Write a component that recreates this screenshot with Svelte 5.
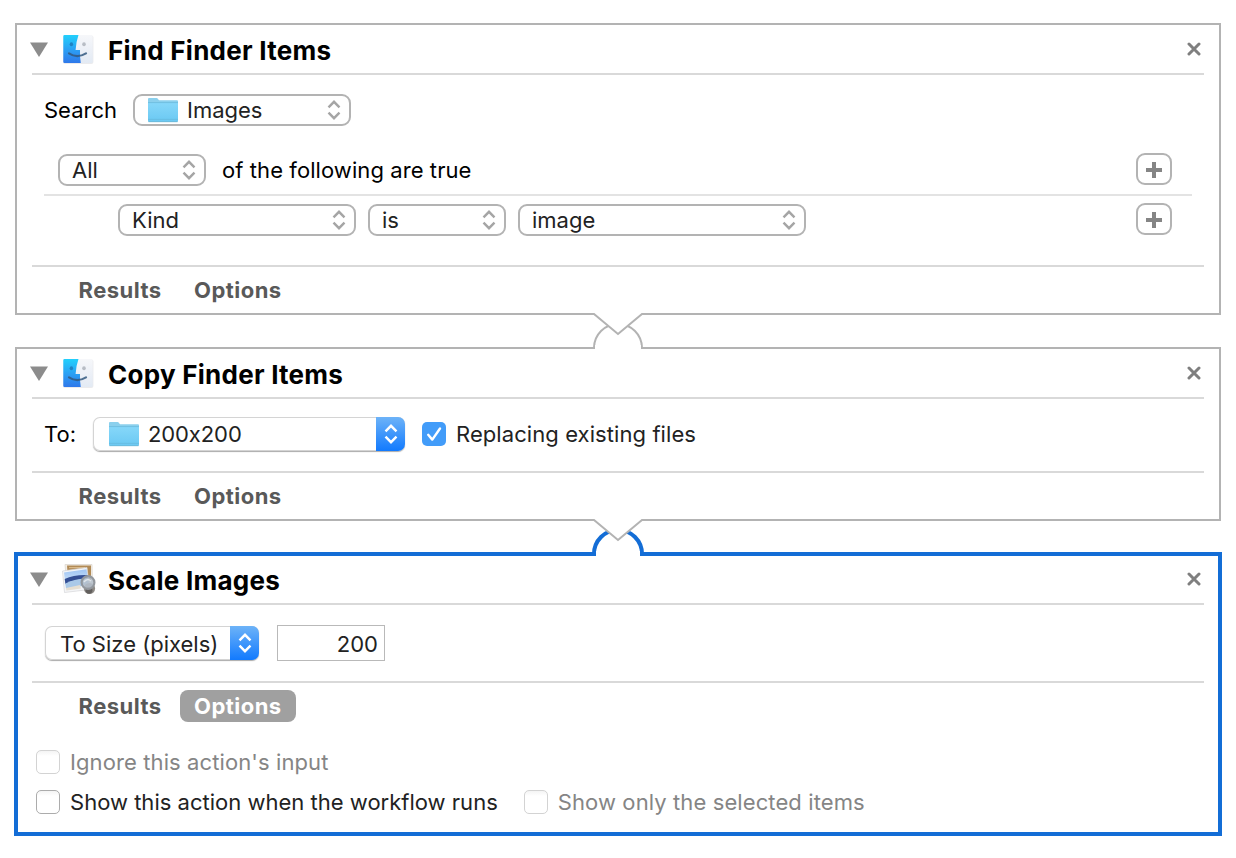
<script>
  let replacing = $state(true);
  let size = $state('200');
</script>

{#snippet finder()}
  <svg class="appicon" width="36" height="34" viewBox="0 0 36 34">
    <defs>
      <linearGradient id="fb" x1="0" y1="0" x2="0" y2="1"><stop offset="0" stop-color="#22d0fc" /><stop offset=".5" stop-color="#2ba2f4" /><stop offset="1" stop-color="#2f78ea" /></linearGradient>
      <linearGradient id="fw" x1="0" y1="0" x2="0" y2="1"><stop offset="0" stop-color="#f6f7fa" /><stop offset="1" stop-color="#e3eaf4" /></linearGradient>
    </defs>
    <rect x="2" y="3.4" width="30.4" height="28.6" rx="2" fill="#dedee1" opacity=".6" />
    <rect x="2.3" y="3" width="29.4" height="28" rx="1.5" fill="url(#fw)" />
    <path d="M3.5 3H17.5Q15 10 14.6 18H19Q18.6 24 19.8 31H3.5Q2.3 31 2.3 29.8V4.2Q2.3 3 3.5 3Z" fill="url(#fb)" />
    <ellipse cx="10.4" cy="12.2" rx="1.7" ry="2" fill="#1c6aa8" opacity=".65" />
    <ellipse cx="23" cy="12.2" rx="1.8" ry="2" fill="#a6abb4" opacity=".75" />
    <path d="M8 21.4Q16 26.8 25 21.4" fill="none" stroke="#34597f" stroke-width="2.2" stroke-linecap="round" opacity=".85" />
  </svg>
{/snippet}

{#snippet picture()}
  <svg class="appicon" width="36" height="34" viewBox="0 0 36 34">
    <defs>
      <linearGradient id="sky" x1="0" y1="0" x2="0" y2="1"><stop offset="0" stop-color="#9fc4f3" /><stop offset="1" stop-color="#d5e9fb" /></linearGradient>
    </defs>
    <path d="M4 2.5L31 2.5L31.5 23L6 24Z" fill="#f3eee6" stroke="#ddd8d0" stroke-width=".8" />
    <path d="M6 3.5H30V19H7Z" fill="#b18a55" />
    <path d="M8 5H24V6.2H8Z" fill="#d9b98a" />
    <path d="M1.5 9L26 5.5L28.5 27.5L3.5 30.5Z" fill="#f4f5f7" stroke="#d5d6d8" stroke-width=".7" />
    <path d="M3 10.5L25.5 7.3L27.5 20.5L4.5 23.5Z" fill="url(#sky)" />
    <path d="M3.7 17Q13 12.5 26.4 13L27 16.5Q14 17 4.4 22Z" fill="#344f94" />
    <path d="M4.4 21.5Q14 16.5 27 16.5L28 23L5 26.5Z" fill="#aac9e8" />
    <path d="M5 26L19 23L20 26.5L5.4 28.6Z" fill="#e6dfd2" />
    <circle cx="28.5" cy="26.5" r="5.6" fill="#8d8985" />
    <circle cx="28" cy="28.3" r="3.4" fill="#625f5d" />
    <circle cx="27" cy="20.5" r="6.4" fill="#b5bfcb" fill-opacity=".85" stroke="#92979d" stroke-width="2.2" />
    <path d="M23 20Q26 15.8 30 19" fill="none" stroke="#e0e6eb" stroke-width="1.5" />
  </svg>
{/snippet}

{#snippet header(title, icon)}
  <header>
    <svg class="disclosure" width="18" height="15"><path d="M0 .5H18L9 15Z" fill="#8c8c8c" /></svg>
    {@render icon()}
    <h2>{title}</h2>
    <svg class="close" width="14" height="14"><path d="M2 2L12 12M12 2L2 12" stroke="#7f7f7f" stroke-width="3" stroke-linecap="round" /></svg>
  </header>
{/snippet}

{#snippet folder()}
  <svg class="folder" width="32" height="26" viewBox="0 0 32 26">
    <defs><linearGradient id="fold" x1="0" y1="0" x2="0" y2="1"><stop offset="0" stop-color="#86d7f9" /><stop offset="1" stop-color="#6bc9f3" /></linearGradient></defs>
    <path d="M1 2Q1 1 2 1H9.5Q10.5 1 11 2L12 3.2H30Q31 3.2 31 4.2V24Q31 25 30 25H2Q1 25 1 24Z" fill="#8bd0ed" />
    <path d="M1 6H31V23.3Q31 24.3 30 24.3H2Q1 24.3 1 23.3Z" fill="url(#fold)" />
    <path d="M1 5.6H31M1 22.4H31" stroke="#66b9dd" stroke-width=".7" />
    <path d="M1.5 24.7H30.5" stroke="#60b2d5" stroke-width=".8" />
  </svg>
{/snippet}

{#snippet arrows()}
  <svg class="arrows" width="14" height="20" viewBox="0 0 14 20"><path d="M1.5 7.3L7 1.8L12.5 7.3M1.5 12.7L7 18.2L12.5 12.7" fill="none" stroke="currentColor" stroke-width="2.4" /></svg>
{/snippet}

{#snippet add()}
  <button class="add" aria-label="Add"><svg width="16" height="16"><path d="M8 0V16M0 8H16" stroke="#858585" stroke-width="4" /></svg></button>
{/snippet}

{#snippet connector(selected)}
  <svg class="connector" width="60" height="46" viewBox="0 0 60 46">
    <path d={selected ? 'M6 37V35A24 24 0 0 1 54 35V37' : 'M6 36V35A24 24 0 0 1 54 35V36'} fill="#fff" stroke={selected ? '#136dd6' : '#b3b3b3'} stroke-width={selected ? 4 : 2} />
    <rect x={selected ? 8 : 7} y="32" width={selected ? 44 : 46} height="6" fill="#fff" />
    <path d="M6 -2V1L30 21L54 1V-2Z" fill="#fff" />
    <path d="M5 1H6L30 21L54 1H55" fill="none" stroke="#b3b3b3" stroke-width="2" />
  </svg>
{/snippet}

<main>
  <section class="card">
    {@render header('Find Finder Items', finder)}
    <div class="body find">
      <div class="row search">
        <span>Search</span>
        <div class="select images">{@render folder()}<span>Images</span>{@render arrows()}</div>
      </div>
      <div class="row rule">
        <div class="select all"><span>All</span>{@render arrows()}</div>
        <span class="phrase">of the following are true</span>
        {@render add()}
      </div>
      <div class="row criteria">
        <div class="select kind"><span>Kind</span>{@render arrows()}</div>
        <div class="select is"><span>is</span>{@render arrows()}</div>
        <div class="select value"><span>image</span>{@render arrows()}</div>
        {@render add()}
      </div>
    </div>
    <footer><span class="tab">Results</span><span class="tab">Options</span></footer>
    {@render connector(false)}
  </section>

  <section class="card">
    {@render header('Copy Finder Items', finder)}
    <div class="body copy">
      <span class="to">To:</span>
      <div class="popup dest">{@render folder()}<span class="folder-name">200x200</span><i>{@render arrows()}</i></div>
      <button class="check on" aria-label="Replacing existing files" onclick={() => (replacing = !replacing)}>
        {#if replacing}<svg width="24" height="24"><path d="M6.2 12.8L10.3 17.6L18 6.5" fill="none" stroke="#fff" stroke-width="2.4" stroke-linecap="round" stroke-linejoin="round" /></svg>{/if}
      </button>
      <span class="replacing">Replacing existing files</span>
    </div>
    <footer><span class="tab">Results</span><span class="tab">Options</span></footer>
    {@render connector(true)}
  </section>

  <section class="card selected">
    {@render header('Scale Images', picture)}
    <div class="body scale">
      <div class="popup size"><span>To Size (pixels)</span><i>{@render arrows()}</i></div>
      <input aria-label="Size" bind:value={size} />
    </div>
    <footer><span class="tab">Results</span><span class="tab active">Options</span></footer>
    <div class="options">
      <div class="row dim"><span class="check"></span><span>Ignore this action's input</span></div>
      <div class="row">
        <span class="check"></span><span class="show">Show this action when the workflow runs</span>
        <div class="row dim only"><span class="check"></span><span>Show only the selected items</span></div>
      </div>
    </div>
  </section>
</main>

<style>
  :global(body) { margin: 0; background: #fff; }
  main {
    box-sizing: border-box;
    width: 1236px;
    height: 858px;
    padding: 23px 15px 0;
    display: flex;
    flex-direction: column;
    gap: 32px;
    font: 22px/26px Inter, sans-serif;
    font-feature-settings: "calt" 0;
    color: #000;
    white-space: nowrap;
    overflow: hidden;
  }
  svg { display: block; flex: none; }
  .card {
    position: relative;
    box-sizing: border-box;
    border: 2px solid #b3b3b3;
    padding: 0 15px;
    flex: none;
  }
  .selected { border: 4px solid #136dd6; margin: -1px -1px 0; padding: 0 14px; height: 284px; }
  header {
    box-sizing: border-box;
    height: 50px;
    display: flex;
    align-items: center;
    border-bottom: 2px solid #d9d9d9;
  }
  .selected header { height: 49px; padding-bottom: 1px; }
  .disclosure { margin-left: -2px; }
  .appicon { margin-left: 13px; }
  h2 { margin: 3px 0 0 11px; font-size: 26px; line-height: 30px; font-weight: 700; letter-spacing: .26px; }
  .close { margin: 0 3px 0 auto; }
  .body { box-sizing: border-box; border-bottom: 2px solid #d9d9d9; display: flex; align-items: center; }
  .row { display: flex; align-items: center; }
  .find { height: 192px; flex-direction: column; align-items: stretch; padding: 19px 12px 0; }
  .search { height: 32px; }
  .search > span { width: 89px; }
  .rule { box-sizing: border-box; margin-top: 18px; height: 52px; padding: 2px 20px 0 14px; border-bottom: 2px solid #e3e3e3; }
  .criteria { height: 48px; padding: 0 20px 0 74px; gap: 12px; }
  .phrase { margin-left: 16px; letter-spacing: .08px; }
  .select {
    box-sizing: border-box;
    height: 32px;
    border: 2px solid #b3b3b3;
    border-radius: 9px;
    padding: 0 8px 0 12px;
    display: flex;
    align-items: center;
    color: #222;
  }
  .select .arrows { margin-left: auto; color: #a5a5a5; }
  .images { width: 218px; }
  .folder { margin-right: 8px; }
  .all { width: 148px; }
  .kind { width: 238px; }
  .is { width: 138px; }
  .value { width: 288px; }
  .add {
    box-sizing: border-box;
    width: 36px;
    height: 32px;
    margin: -2px 0 0 auto;
    padding: 2px 0 0;
    border: 2px solid #b3b3b3;
    border-radius: 9px;
    background: #fff;
    display: grid;
    place-items: center;
  }
  footer { height: 46px; padding-left: 32px; display: flex; align-items: center; }
  .tab { padding: 0 14px 0 14.5px; margin-right: 4px; height: 32px; line-height: 32px; border-radius: 8px; font-weight: 700; letter-spacing: .46px; color: #595959; }
  .active { background: #a0a0a0; color: #fff; }
  .copy { height: 74px; padding: 0 0 2px 12px; }
  .to { width: 49px; }
  .popup {
    box-sizing: border-box;
    height: 34px;
    border-radius: 7px;
    padding-left: 15px;
    display: flex;
    align-items: center;
    color: #222;
    box-shadow: 0 0 0 1px #d4d4d4 inset, 0 1px 1px #aaa;
    overflow: hidden;
  }
  .popup i {
    width: 29px;
    height: 34px;
    margin-left: auto;
    display: grid;
    place-items: center;
    color: #fff;
    background: linear-gradient(#6db3f8, #127afe);
  }
  .dest { width: 312px; }
  .folder-name { letter-spacing: -.1px; }
  .check {
    box-sizing: border-box;
    flex: none;
    width: 24px;
    height: 24px;
    border: 1px solid #acacac;
    border-radius: 5px;
    background: linear-gradient(#f4f4f4, #fff 5px);
    padding: 0;
  }
  .check.on { margin-left: 17px; border: 0; background: #429cf9; }
  .replacing { margin-left: 10px; color: #222; letter-spacing: .08px; }
  .scale { height: 78px; padding-left: 13px; }
  .size { width: 214px; }
  .size > span { padding-top: 1px; }
  input {
    box-sizing: border-box;
    width: 108px;
    height: 36px;
    margin-left: 18px;
    padding: 2px 6px 0;
    border: 1px solid #b9b9b9;
    outline: 0;
    font: inherit;
    color: #222;
    text-align: right;
  }
  .options { padding: 13px 0 0 4px; display: flex; flex-direction: column; }
  .options > .row { height: 40px; }
  .options .row { color: #222; }
  .options .check { margin-right: 10px; }
  .options .dim { color: #858585; letter-spacing: .1px; }
  .show { letter-spacing: .01px; }
  .dim .check { border-color: #d3d3d3; }
  .only { margin-left: 26px; }
  .connector { position: absolute; z-index: 1; left: 50%; margin-left: -30px; top: 100%; overflow: visible; }
</style>
